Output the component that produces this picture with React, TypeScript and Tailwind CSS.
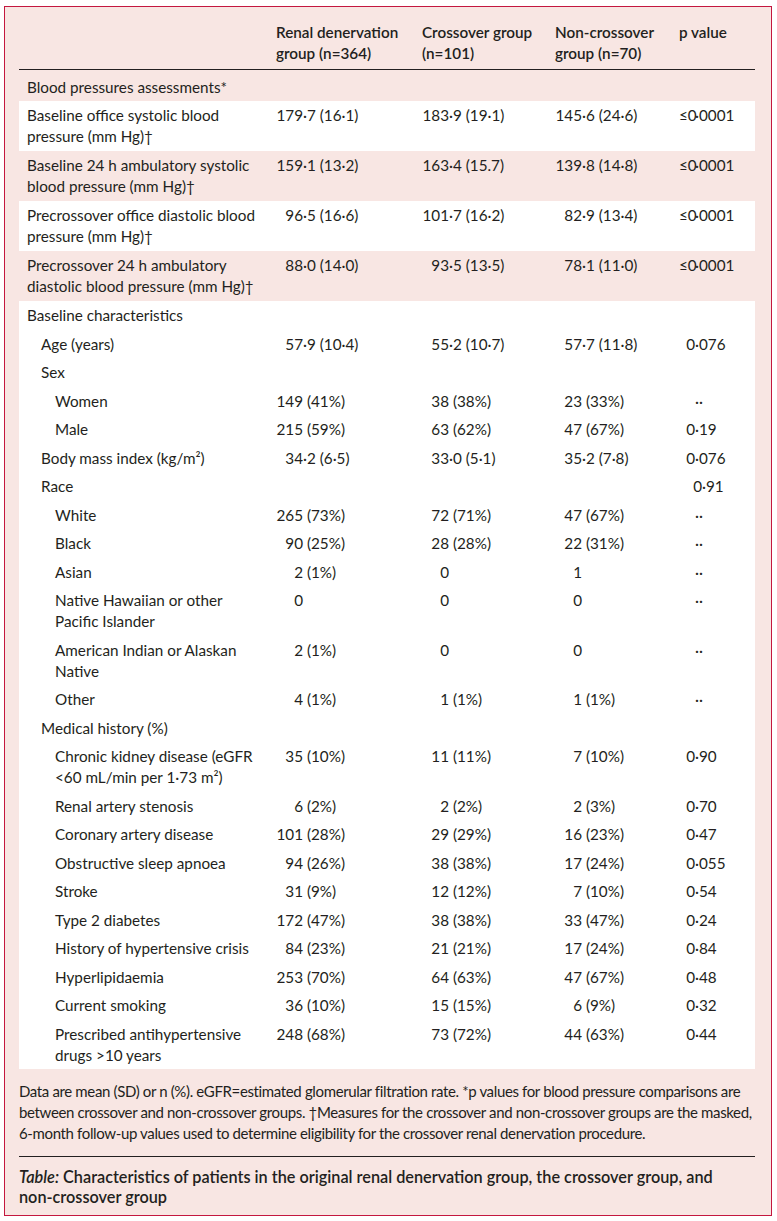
import React from "react";

type Row = {
  label: React.ReactNode[];
  level: 0 | 1 | 2;
  vals?: [string, string, string, string];
  pink?: boolean;
  shiftP?: boolean;
};

const bpRows: Row[] = [
  { label: ["Baseline office systolic blood", "pressure (mm Hg)†"], level: 0, vals: ["179·7 (16·1)", "183·9 (19·1)", "145·6 (24·6)", "≤0·0001"] },
  { label: ["Baseline 24 h ambulatory systolic", "blood pressure (mm Hg)†"], level: 0, vals: ["159·1 (13·2)", "163·4 (15.7)", "139·8 (14·8)", "≤0·0001"], pink: true },
  { label: ["Precrossover office diastolic blood", "pressure (mm Hg)†"], level: 0, vals: ["96·5 (16·6)", "101·7 (16·2)", "82·9 (13·4)", "≤0·0001"] },
  { label: ["Precrossover 24 h ambulatory", "diastolic blood pressure (mm Hg)†"], level: 0, vals: ["88·0 (14·0)", "93·5 (13·5)", "78·1 (11·0)", "≤0·0001"], pink: true },
];

const baseRows: Row[] = [
  { label: ["Baseline characteristics"], level: 0 },
  { label: ["Age (years)"], level: 1, vals: ["57·9 (10·4)", "55·2 (10·7)", "57·7 (11·8)", "0·076"] },
  { label: ["Sex"], level: 1 },
  { label: ["Women"], level: 2, vals: ["149 (41%)", "38 (38%)", "23 (33%)", "··"] },
  { label: ["Male"], level: 2, vals: ["215 (59%)", "63 (62%)", "47 (67%)", "0·19"] },
  { label: ["Body mass index (kg/m²)"], level: 1, vals: ["34·2 (6·5)", "33·0 (5·1)", "35·2 (7·8)", "0·076"] },
  { label: ["Race"], level: 1, vals: ["", "", "", "0·91"], shiftP: true },
  { label: ["White"], level: 2, vals: ["265 (73%)", "72 (71%)", "47 (67%)", "··"] },
  { label: ["Black"], level: 2, vals: ["90 (25%)", "28 (28%)", "22 (31%)", "··"] },
  { label: ["Asian"], level: 2, vals: ["2 (1%)", "0", "1", "··"] },
  { label: ["Native Hawaiian or other", "Pacific Islander"], level: 2, vals: ["0", "0", "0", "··"] },
  { label: ["American Indian or Alaskan", "Native"], level: 2, vals: ["2 (1%)", "0", "0", "··"] },
  { label: ["Other"], level: 2, vals: ["4 (1%)", "1 (1%)", "1 (1%)", "··"] },
  { label: ["Medical history (%)"], level: 1 },
  { label: ["Chronic kidney disease (eGFR", "<60 mL/min per 1·73 m²)"], level: 2, vals: ["35 (10%)", "11 (11%)", "7 (10%)", "0·90"] },
  { label: ["Renal artery stenosis"], level: 2, vals: ["6 (2%)", "2 (2%)", "2 (3%)", "0·70"] },
  { label: ["Coronary artery disease"], level: 2, vals: ["101 (28%)", "29 (29%)", "16 (23%)", "0·47"] },
  { label: ["Obstructive sleep apnoea"], level: 2, vals: ["94 (26%)", "38 (38%)", "17 (24%)", "0·055"] },
  { label: ["Stroke"], level: 2, vals: ["31 (9%)", "12 (12%)", "7 (10%)", "0·54"] },
  { label: ["Type 2 diabetes"], level: 2, vals: ["172 (47%)", "38 (38%)", "33 (47%)", "0·24"] },
  { label: ["History of hypertensive crisis"], level: 2, vals: ["84 (23%)", "21 (21%)", "17 (24%)", "0·84"] },
  { label: ["Hyperlipidaemia"], level: 2, vals: ["253 (70%)", "64 (63%)", "47 (67%)", "0·48"] },
  { label: ["Current smoking"], level: 2, vals: ["36 (10%)", "15 (15%)", "6 (9%)", "0·32"] },
  { label: ["Prescribed antihypertensive", "drugs >10 years"], level: 2, vals: ["248 (68%)", "73 (72%)", "44 (63%)", "0·44"] },
];

const indent = ["pl-[8px]", "pl-[22px]", "pl-[36px]"];
const cols = "grid grid-cols-[257px_146px_133px_124px_76px]";

// decimal-aligned number: integer part right aligned in a fixed box
function Num({ v, box }: { v: string; box: string }) {
  if (!v) return null;
  const i = v.search(/[·.\s]/);
  const head = i < 0 ? v : v.slice(0, i);
  const tail = i < 0 ? "" : v.slice(i);
  return (
    <span className="whitespace-pre">
      <span className={`inline-block text-right ${box}`}>{head}</span>
      {tail}
    </span>
  );
}

function TableRow({ row, pad }: { row: Row; pad: string }) {
  return (
    <div className={`${cols} ${pad} ${row.pink ? "" : "bg-white"}`}>
      <div className={`${indent[row.level]} whitespace-nowrap`}>
        {row.label.map((l, i) => (
          <div key={i}>{l}</div>
        ))}
      </div>
      {row.vals ? (
        <>
          <div><Num v={row.vals[0]} box="w-[27px]" /></div>
          <div><Num v={row.vals[1]} box="w-[27px]" /></div>
          <div><Num v={row.vals[2]} box="w-[27px]" /></div>
          <div className={row.shiftP ? "pl-[7px]" : ""}><Num v={row.vals[3]} box="w-[16px]" /></div>
        </>
      ) : null}
    </div>
  );
}

export default function App() {
  return (
    <div className="min-h-[1221px] bg-white pt-[6px] pl-[4px] text-[#231f20] font-['Lato','Liberation_Sans',sans-serif]">
      <div className="w-[768px] border border-[#c4173f] bg-[#f8e6e3] pl-[14px] pr-[16px] pt-[14.5px] pb-[8px]">
        <div className="text-[15.25px] leading-[21px]">
          <div className={`${cols} pb-[5.5px] font-semibold border-b border-[#231f20]`}>
            <div />
            <div>Renal denervation<br />group (n=364)</div>
            <div>Crossover group<br />(n=101)</div>
            <div>Non-crossover<br />group (n=70)</div>
            <div>p value</div>
          </div>
          <div className="pt-[7px] pb-[2.5px] pl-[8px]">Blood pressures assessments*</div>
          {bpRows.map((r, i) => (
            <TableRow key={i} row={r} pad="pt-[4px] pb-[4px]" />
          ))}
          {baseRows.map((r, i) => (
            <TableRow key={i} row={r} pad="pt-[4.5px] pb-[3px]" />
          ))}
        </div>

        <p className="mt-[12.5px] text-[15px] leading-[21px] tracking-[-0.36px] whitespace-nowrap">
          Data are mean (SD) or n (%). eGFR=estimated glomerular filtration rate. *p values for blood pressure comparisons are
          <br />
          between crossover and non-crossover groups. †Measures for the crossover and non-crossover groups are the masked,
          <br />
          6-month follow-up values used to determine eligibility for the crossover renal denervation procedure.
        </p>

        <div className="mt-[12px] border-t border-[#231f20]" />

        <p className="mt-[10px] text-[16.25px] leading-[20px] font-semibold whitespace-nowrap">
          <i>Table:</i> Characteristics of patients in the original renal denervation group, the crossover group, and
          <br />
          non-crossover group
        </p>
      </div>
    </div>
  );
}
